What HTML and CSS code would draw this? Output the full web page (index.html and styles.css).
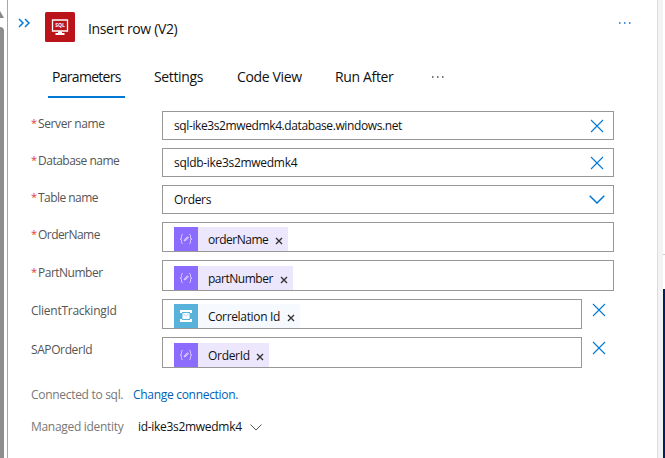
FILE: index.html
```
<!DOCTYPE html>
<html lang="en">
<head>
<meta charset="utf-8">
<title>Insert row (V2)</title>
<link rel="stylesheet" href="styles.css">
</head>
<body>
<svg class="defs" width="0" height="0">
  <symbol id="close" viewBox="0 0 14 14"><path d="M1 1l12 12M13 1L1 13" fill="none" stroke="currentColor" stroke-width="1.1"/></symbol>
  <symbol id="remove" viewBox="0 0 8 8"><path d="M1 1l6 6M7 1L1 7" fill="none" stroke="currentColor" stroke-width="1.4"/></symbol>
  <symbol id="expression" viewBox="0 0 24 24"><g fill="none" stroke="#d8cbff" stroke-width="1"><path d="M9 7.500H8.500Q7.500 7.500 7.500 8.500V10.500Q7.500 12 6 12Q7.500 12 7.500 13.500V15.500Q7.500 16.500 8.500 16.500H9M15 7.500h.5Q16.500 7.500 16.500 8.500V10.500Q16.500 12 18 12Q16.500 12 16.500 13.500V15.500Q16.500 16.500 15.500 16.500H15"/><path d="M10 14l1-2 2.500-2.200 1 1L12 13.200z" fill="#bda8ff"/></g></symbol>
  <symbol id="message" viewBox="0 0 24 24"><path d="M6 6h12v3h-2V8H8v1H6zM6 18h12v-3h-2v1H8v-1H6z" fill="#fff"/><path d="M8.500 9h7v6h-7z" fill="#fff"/><path d="M9 9.500l3 2.500 3-2.500" fill="none" stroke="#9bd0e6" stroke-width=".8"/></symbol>
</svg>
<div class="app">
  <div class="scrollbar"><svg class="arrow" width="4" height="8"><path d="M0 0l4 7H0z" fill="#8a8886"/></svg><div class="thumb"></div></div>
  <main class="panel">
    <header class="header">
      <svg class="collapse" width="12" height="10" viewBox="0 0 12 10"><path d="M1 1l4 4-4 4M7 1l4 4-4 4" fill="none" stroke="#0078d4" stroke-width="1.500"/></svg>
      <svg class="logo" width="30" height="30" viewBox="0 0 30 30"><rect width="30" height="30" rx="1.500" fill="#ba141a"/><path d="M7.500 8h15v11h-15z" fill="none" stroke="#fff" stroke-width="1.300"/><path d="M13 19.500h4V21h2.500v2h-9v-2H13z" fill="#fff"/><text x="15" y="15.300" text-anchor="middle" class="logo-text">SQL</text></svg>
      <h1>Insert row (V2)</h1>
      <svg class="more" width="12" height="2"><path d="M0 0h1.500v2H0zM5 0h1.500v2H5zM10 0h1.500v2H10z" fill="#4593dd"/></svg>
    </header>
    <nav class="tabs">
      <span class="tab active">Parameters</span><span class="tab settings">Settings</span><span class="tab code">Code View</span><span class="tab run">Run After</span>
      <svg class="tab-more" width="12" height="2"><path d="M0 0h1.500v2H0zM5 0h1.500v2H5zM10 0h1.500v2H10z" fill="#777"/></svg>
    </nav>
    <section class="form">
      <div class="row"><label><i>*</i><span class="l-server">Server name</span></label><div class="field"><span class="v-server">sql-ike3s2mwedmk4.database.windows.net</span><svg class="x"><use href="#close"/></svg></div></div>
      <div class="row"><label><i>*</i><span class="l-database">Database name</span></label><div class="field"><span class="v-database">sqldb-ike3s2mwedmk4</span><svg class="x"><use href="#close"/></svg></div></div>
      <div class="row"><label><i>*</i><span class="l-table">Table name</span></label><div class="field"><span class="v-orders">Orders</span><svg class="chevron" viewBox="0 0 16 9"><path d="M.7.800L8 8 15.300.800" fill="none" stroke="#0078d4" stroke-width="1.500"/></svg></div></div>
      <div class="row order"><label><i>*</i><span class="l-order">OrderName</span></label><div class="field tokens"><div class="token"><svg class="badge"><use href="#expression"/></svg><span class="k-order">orderName</span><svg class="rm"><use href="#remove"/></svg></div></div></div>
      <div class="row part"><label><i>*</i><span class="l-part">PartNumber</span></label><div class="field tokens"><div class="token w-part"><svg class="badge"><use href="#expression"/></svg><span class="k-part">partNumber</span><svg class="rm"><use href="#remove"/></svg></div></div></div>
      <div class="row client"><label><span class="l-client">ClientTrackingId</span></label><div class="field tokens"><div class="token w-corr"><svg class="badge"><use href="#message"/></svg><span class="k-corr">Correlation Id</span><svg class="rm"><use href="#remove"/></svg></div></div><svg class="x"><use href="#close"/></svg></div>
      <div class="row sap"><label><span class="l-sap">SAPOrderId</span></label><div class="field tokens"><div class="token w-id"><svg class="badge"><use href="#expression"/></svg><span class="k-id">OrderId</span><svg class="rm"><use href="#remove"/></svg></div></div><svg class="x"><use href="#close"/></svg></div>
    </section>
    <footer>
      <div class="line"><span class="f-conn">Connected to sql.</span><a class="f-change">Change connection.</a></div>
      <div class="line"><span class="f-managed">Managed identity</span><span class="f-id">id-ike3s2mwedmk4</span><svg width="12" height="7" viewBox="0 0 12 7"><path d="M.5.500L6 6 11.500.500" fill="none" stroke="#555"/></svg></div>
    </footer>
  </main>
  <div class="edge"></div>
  <div class="canvas"><div class="canvas-head"></div><div class="canvas-gap"></div><div class="canvas-body"></div></div>
</div>
</body>
</html>
```
FILE: styles.css
```
* { box-sizing: border-box; }
body { margin: 0; background: #fff; font: 12px/16px "Open Sans", "Noto Sans", sans-serif; color: #111; overflow: hidden; }
svg { display: block; flex: none; }
.defs { position: absolute; }
.app { display: flex; width: 665px; height: 458px; }
.scrollbar { width: 7px; padding-top: 11px; display: flex; flex-direction: column; }
.thumb { width: 4px; flex: 1; margin-top: 8px; background: #8f8d8b; border-top-right-radius: 4px; }
.panel { width: 650px; border-left: 1px solid #a6a6a6; }
.edge { width: 6px; border-left: 1px solid #dedede; background: #f3f3f3; }
.canvas { width: 2px; display: flex; flex-direction: column; }
.canvas-head { height: 255px; border-bottom: 1px solid #ccc; }
.canvas-gap { height: 34px; }
.canvas-body { flex: 1; background: #00205b; }

.header { display: flex; height: 54px; padding: 12px 26px 0 10px; }
.collapse { margin-top: 6px; }
.logo { margin-left: 15px; }
.logo-text { font: bold 5px "Open Sans", sans-serif; fill: #fff; }
h1 { margin: 7px 0 0 13px; font-size: 14px; line-height: 20px; font-weight: 400; white-space: nowrap; letter-spacing: -.35px; }
.more { margin: 10px 0 0 auto; }

.tabs { display: flex; height: 57px; padding-left: 40px; font-size: 14px; line-height: 20px; white-space: nowrap; }
.tab { padding-top: 13px; height: 44px; letter-spacing: -.35px; }
.active { width: 77px; padding-left: 4px; border-bottom: 2px solid #0078d4; letter-spacing: -.7px; }
.settings { width: 83px; margin-left: 29px; }
.code { width: 98px; }
.run { width: 97px; }
.tab-more { margin-top: 22px; }

.row { display: flex; height: 29px; margin-bottom: 8px; }
label { display: flex; width: 154px; padding: 5px 0 0 23px; color: #555; white-space: nowrap; }
label i { width: 7px; margin-top: -1px; font-size: 11px; color: #e03a3e; font-style: normal; }
.field { display: flex; align-items: center; justify-content: space-between; width: 452px; border: 1px solid #979797; padding: 0 9px 0 11px; white-space: nowrap; }
.x { width: 14px; height: 14px; color: #0078d4; }
.chevron { width: 16px; height: 9px; margin-right: -1px; }
.order { height: 30px; }
.part { height: 31px; }
.client { height: 30px; }
.client label { padding-top: 4px; }
.sap { height: 31px; margin-bottom: 0; }
.client .field, .sap .field { width: 420px; }
.row > .x { margin: 4px 0 0 10px; }
.tokens { align-items: flex-end; justify-content: flex-start; }
.token { display: flex; align-items: center; width: 114px; height: 24px; background: #ede7fd; }
.token span { padding: 1px 0 0 10px; }
.badge { width: 24px; height: 24px; background: #8c6cff; }
.rm { width: 8px; height: 8px; margin: 3px 5px 0 auto; color: #333; }
.w-part { width: 119px; }
.w-corr { width: 126px; background: #f6faff; }
.w-corr .badge { background: #59b2d9; }
.w-id { width: 95px; }

footer { padding: 19px 0 0 23px; color: #777; white-space: nowrap; }
.line { display: flex; align-items: center; height: 16px; margin-bottom: 16px; }
.f-conn { width: 102px; }
.f-change { color: #005fb7; }
.f-managed { width: 107px; }
.f-id { width: 112px; color: #111; }

.field span, label span, .line span, .line a { letter-spacing: -.3px; }
.field .v-server { letter-spacing: -.39px; }
label .l-server { letter-spacing: -.38px; }
label .l-database, label .l-part { letter-spacing: -.5px; }
label .l-table, label .l-order { letter-spacing: -.55px; }
label .l-client { letter-spacing: -.26px; }
label .l-sap { letter-spacing: -.4px; }
.field .k-order, .field .k-part { letter-spacing: -.48px; }
.field .k-corr { letter-spacing: -.34px; }
```
